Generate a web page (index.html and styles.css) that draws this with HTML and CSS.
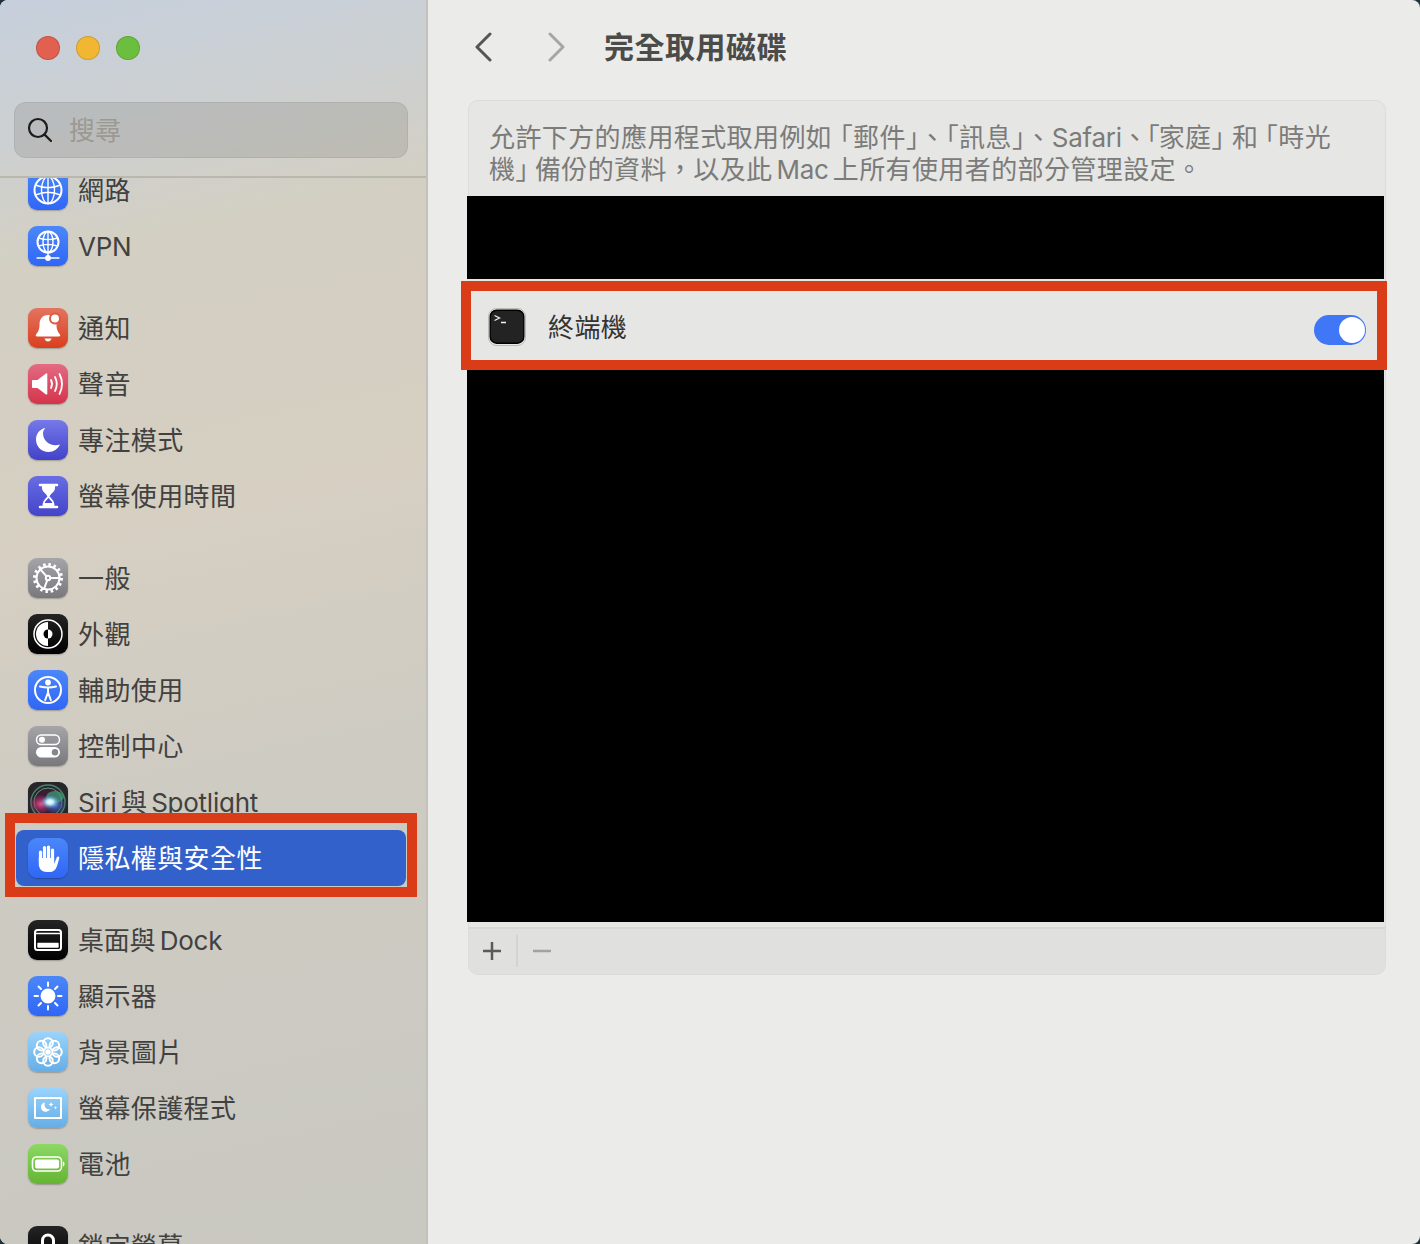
FILE: index.html
```html
<!DOCTYPE html>
<html lang="zh-Hant">
<head>
<meta charset="utf-8">
<title>完全取用磁碟</title>
<link rel="stylesheet" href="styles.css">
</head>
<body>
<div class="window">
  <aside class="sidebar">
    <div class="lights">
      <span class="light red"></span><span class="light yellow"></span><span class="light green"></span>
    </div>
    <div class="search">
      <svg class="search-icon" viewBox="0 0 26 26"><circle cx="11" cy="11" r="9"/><path d="M17.6 17.6 24 24"/></svg>
      <span class="search-text">搜尋</span>
    </div>
    <div class="divider"></div>
    <div class="scroller">
      <div class="list">
        <section class="group first">
          <div class="row"><span class="icon i-blue"><svg viewBox="0 0 40 40" class="line"><circle class="bold" cx="20" cy="20" r="13.500"/><ellipse cx="20" cy="20" rx="6.500" ry="13.500"/><path d="M20 6.500v27M7.500 15c8 3.500 17 3.500 25 0M7.500 25c8-3.500 17-3.500 25 0"/></svg></span><span class="label">網路</span></div>
          <div class="row"><span class="icon i-blue"><svg viewBox="0 0 40 40" class="line"><circle class="bold" cx="20" cy="16" r="10.500"/><ellipse cx="20" cy="16" rx="5" ry="10.500"/><path d="M20 5.500v21M10.500 12c6 2 13 2 19 0M10.500 20c6-2 13-2 19 0M20 27v5M9 32h22"/><circle class="solid" cx="20" cy="32" r="2.200"/></svg></span><span class="label latin">VPN</span></div>
        </section>
        <section class="group">
          <div class="row"><span class="icon i-red"><svg viewBox="0 0 40 40" class="fill"><path d="M20 7c-6 0-8.500 4.500-8.500 10 0 5-2 7.500-3.500 9.500-.6 1 0 2 1.200 2h21.600c1.200 0 1.800-1 1.200-2-1.500-2-3.500-4.500-3.500-9.500 0-5.500-2.500-10-8.500-10z"/><path d="M16.500 30.500h7c-.5 2-2 3-3.500 3s-3-1-3.500-3z"/><circle class="ring-red" cx="27" cy="10.500" r="5"/></svg></span><span class="label">通知</span></div>
          <div class="row"><span class="icon i-pink"><svg viewBox="0 0 40 40" class="fill"><path d="M5 16h4.500L18 9.500c.6-.4 1.300 0 1.300.7v19.600c0 .7-.7 1.100-1.300.7L9.500 24H5c-.6 0-1-.4-1-1v-6c0-.6.400-1 1-1z"/><path class="wave" d="M23 16c1.300 2.500 1.300 5.500 0 8M27 13c2.300 4.500 2.300 9.500 0 14M31.500 10c3.300 6.500 3.300 13.500 0 20"/></svg></span><span class="label">聲音</span></div>
          <div class="row"><span class="icon i-purple"><svg viewBox="0 0 40 40" class="fill"><path d="M17.500 8C11.500 9 8 14 8 19.500 8 26.500 13.500 32 20.500 32c5 0 9.500-3 11.500-7.500-1.500.6-3 .8-4.500.8-7 0-12.500-5.300-12.500-12 0-1.800.8-3.800 2.500-5.300z"/></svg></span><span class="label">專注模式</span></div>
          <div class="row"><span class="icon i-indigo"><svg viewBox="0 0 40 40"><path class="hg-line" d="M12 9h17M12 31h17"/><path class="hg-solid" d="M14 9h13v3c0 4-4.500 5.500-5 8h-3c-.5-2.500-5-4-5-8z"/><path class="hg-outline" d="M20.500 20c.4 2.500 5 4 5 8v3h-10v-3c0-4 4.600-5.500 5-8z"/><path class="hg-solid" d="M15 27h11v4H15z"/></svg></span><span class="label">螢幕使用時間</span></div>
        </section>
        <section class="group">
          <div class="row"><span class="icon i-gray"><svg viewBox="0 0 40 40" class="line"><circle class="teeth" cx="20" cy="20" r="13.500"/><circle class="bold" cx="20" cy="20" r="11.500"/><circle class="bold" cx="20" cy="20" r="2.200"/><path class="bold" d="M18.600 18.300 12 11M22.200 20H31.500M19.300 22.100 16 31"/></svg></span><span class="label">一般</span></div>
          <div class="row"><span class="icon i-black"><svg viewBox="0 0 40 40"><circle class="ap-ring" cx="20" cy="20" r="14"/><path class="ap-white" d="M20 8a12 12 0 0 0 0 24z"/><path class="ap-white" d="M20 15.500a4.500 4.500 0 0 1 0 9z"/><path class="ap-black" d="M20 15.500a4.500 4.500 0 0 0 0 9z"/></svg></span><span class="label">外觀</span></div>
          <div class="row"><span class="icon i-blue"><svg viewBox="0 0 40 40" class="line"><circle class="bold" cx="20" cy="20" r="13"/><circle class="solid" cx="20" cy="12.500" r="2.200"/><path class="bold" d="M12 16.500c5 1.300 11 1.300 16 0M20 17.500v6M20 22.500l-2.800 7.500M20 22.500l2.800 7.500"/></svg></span><span class="label">輔助使用</span></div>
          <div class="row"><span class="icon i-gray"><svg viewBox="0 0 40 40"><rect class="cc-line" x="8.500" y="9" width="23" height="9.500" rx="4.750"/><circle class="cc-white" cx="14" cy="13.750" r="3"/><rect class="cc-white" x="8" y="21" width="24" height="10.500" rx="5.250"/><circle class="cc-gray" cx="27" cy="26.250" r="3.200"/></svg></span><span class="label">控制中心</span></div>
          <div class="row"><span class="icon i-siri"><svg viewBox="0 0 40 40"><defs><radialGradient id="siriA"><stop offset="0" stop-color="#fff"/><stop offset=".35" stop-color="#bdeaf7"/><stop offset="1" stop-color="#3a7ed0" stop-opacity="0"/></radialGradient><radialGradient id="siriB"><stop offset="0" stop-color="#f0508c"/><stop offset="1" stop-color="#8a2458" stop-opacity=".25"/></radialGradient><radialGradient id="siriC"><stop offset="0" stop-color="#4a78d8"/><stop offset="1" stop-color="#2d4f90" stop-opacity=".3"/></radialGradient></defs><circle class="siri-ring" cx="20" cy="20" r="17"/><circle class="siri-ring-in" cx="20" cy="20" r="14"/><ellipse cx="13" cy="22" rx="11" ry="9" fill="url(#siriB)"/><ellipse cx="27" cy="23" rx="10" ry="8" fill="url(#siriC)"/><ellipse cx="27" cy="15" rx="9" ry="6" class="siri-green"/><ellipse cx="22" cy="20" rx="10" ry="7" fill="url(#siriA)"/></svg></span><span class="label latin">Siri&#8201;與&#8201;Spotlight</span></div>
          <div class="row selected"><span class="icon i-blue"><svg viewBox="0 0 40 40" class="hand"><path class="finger" d="M12.500 23V14M16.500 20V9.500M20.500 20V9M24.500 22V12"/><path class="palm" d="M10.800 20h15.400v6l2.600-6.800c.5-1.300 2.800-.8 2.500 1L29 28c-1.200 4-3.800 6-7.500 6H19c-5 0-8.200-3-8.200-8z"/></svg></span><span class="label">隱私權與安全性</span></div>
        </section>
        <section class="group">
          <div class="row"><span class="icon i-black"><svg viewBox="0 0 40 40" class="line"><rect class="bold" x="7" y="10" width="26" height="20" rx="2.500"/><path d="M7.500 13.500h25"/><rect class="solid" x="10" y="23.500" width="20" height="3.500"/></svg></span><span class="label latin">桌面與&#8201;Dock</span></div>
          <div class="row"><span class="icon i-blue"><svg viewBox="0 0 40 40" class="line bold"><circle class="solid" cx="20" cy="20" r="6.500"/><path d="M20 6.500v3.500M20 30v3.500M6.500 20H10M30 20h3.500M10.500 10.500l2.500 2.500M27 27l2.500 2.500M10.500 29.500 13 27M27 13l2.500-2.500"/></svg></span><span class="label">顯示器</span></div>
          <div class="row"><span class="icon i-sky"><svg viewBox="0 0 40 40" class="line bold"><circle cx="20" cy="11" r="4.800"/><circle cx="20" cy="29" r="4.800"/><circle cx="11" cy="20" r="4.800"/><circle cx="29" cy="20" r="4.800"/><circle cx="13.600" cy="13.600" r="4.800"/><circle cx="26.400" cy="13.600" r="4.800"/><circle cx="13.600" cy="26.400" r="4.800"/><circle cx="26.400" cy="26.400" r="4.800"/><circle class="solid" cx="20" cy="20" r="1.800"/></svg></span><span class="label">背景圖片</span></div>
          <div class="row"><span class="icon i-sky"><svg viewBox="0 0 40 40" class="line bold"><rect x="7" y="10" width="26" height="20"/><path class="solid no-stroke" d="M17 14.500c-3 .8-4.500 3-4 5.500.5 2.800 3.200 4.200 6 3.500 1.500-.4 2.600-1.300 3.200-2.500-3.800 1-6.700-2.500-5.200-6.500zM23 14l.8 1.700 1.700.8-1.700.8L23 19l-.8-1.700-1.700-.8 1.700-.8zM27.500 18l.5 1.200 1.200.5-1.200.5-.5 1.200-.5-1.200-1.200-.5 1.200-.5z"/></svg></span><span class="label">螢幕保護程式</span></div>
          <div class="row"><span class="icon i-green"><svg viewBox="0 0 40 40"><rect class="bat-line" x="4.500" y="13" width="29" height="14" rx="4"/><rect class="cc-white" x="7" y="15.500" width="24" height="9" rx="2"/><path class="cc-white" d="M35 17.500c1 .5 1.500 1.500 1.500 2.500s-.5 2-1.500 2.500z"/></svg></span><span class="label">電池</span></div>
        </section>
        <section class="group">
          <div class="row"><span class="icon i-black"><svg viewBox="0 0 40 40"><path class="lock-arc" d="M14.500 19v-4.500a5.500 5.500 0 0 1 11 0V19"/><rect class="cc-white" x="11" y="18" width="18" height="14" rx="2.500"/></svg></span><span class="label">鎖定螢幕</span></div>
        </section>
      </div>
      <div class="mark mark-side"></div>
    </div>
  </aside>
  <main class="content">
    <header class="toolbar">
      <svg class="chevron back" viewBox="0 0 18 30"><path d="M16 2 3 15l13 13"/></svg>
      <svg class="chevron forward" viewBox="0 0 18 30"><path d="M2 2l13 13L2 28"/></svg>
      <h1 class="title">完全取用磁碟</h1>
    </header>
    <section class="panel">
      <p class="desc">允許下方的應用程式取用例如<span class="open">「</span>郵件」、「訊息」、<span class="lat">Safari</span><span class="cm">、「</span>家庭<span class="br">」</span>和<span class="open wide">「</span>時光<br>機<span class="br wide">」</span>備份的資料，以及此<span class="lat gap">Mac</span>上所有使用者的部分管理設定。</p>
      <div class="redact short"></div>
      <div class="app-row">
        <svg class="terminal" viewBox="0 0 38 38"><rect class="term-edge" x="0.500" y="0.500" width="37" height="37" rx="8"/><rect class="term-body" x="2.200" y="2.200" width="33.600" height="33" rx="6.500"/><path class="term-glyph" d="M6.500 7.500l5 2.500-5 2.500M13 14.500h5"/></svg>
        <span class="app-name">終端機</span>
        <span class="toggle"><span class="knob"></span></span>
        <div class="mark mark-row"></div>
      </div>
      <div class="redact tall"></div>
      <footer class="actions">
        <svg class="act add" viewBox="0 0 18 18"><path d="M9 0v18M0 9h18"/></svg>
        <span class="sep"></span>
        <svg class="act remove" viewBox="0 0 18 18"><path d="M0 9h18"/></svg>
      </footer>
    </section>
  </main>
</div>
</body>
</html>
```

FILE: styles.css
```css
* { box-sizing: border-box; }
html, body { margin: 0; height: 100%; overflow: hidden; }
body { background: #1f3238; font-family: Inter, "Noto Sans CJK TC", sans-serif; }

.window { display: flex; height: 1244px; border-radius: 8px; overflow: hidden; background: #ebebe9; }

.sidebar {
  position: relative;
  flex: 0 0 428px;
  display: flex;
  flex-direction: column;
  background: linear-gradient(168deg, #c6cfdc 0%, #ccd0d2 10%, #d3cfc3 20%, #d6cfc2 42%, #cecbc2 62%, #c9c8c1 100%);
  border-right: 2px solid #c2c1bc;
}
.lights { display: flex; gap: 16px; padding: 36px 0 0 36px; }
.light { width: 24px; height: 24px; border-radius: 50%; border: 1px solid rgba(0,0,0,.14); }
.light.red { background: #e1604f; }
.light.yellow { background: #f2b732; }
.light.green { background: #6cbf3e; }

.search {
  display: flex; align-items: center;
  margin: 42px 0 0 14px;
  width: 394px; height: 56px;
  padding-left: 12px;
  border-radius: 12px;
  background: rgba(90,90,80,.16);
  border: 1px solid rgba(0,0,0,.06);
}
.search-icon { width: 26px; height: 26px; fill: none; stroke: #1c1c1c; stroke-width: 2.2; stroke-linecap: round; }
.search-text { margin-left: 16px; padding-top: 2px; font-size: 26px; line-height: 32px; color: #9a9992; }

.divider { margin-top: 18px; height: 2px; background: #bab7ad; }

.scroller { flex: 1; overflow: hidden; }
.list { margin-top: -16px; }
.group { margin-top: 26px; }
.group.first { margin-top: 0; }

.row { display: flex; align-items: center; gap: 10px; height: 56px; margin: 0 20px 0 16px; padding-left: 12px; border-radius: 8px; }
.row.selected { background: #3361cc; }
.label { padding-top: 2px; font-size: 26px; line-height: 32px; letter-spacing: .4px; color: #414140; white-space: nowrap; }
.label.latin { letter-spacing: -.25px; }
.row.selected .label { color: #fff; }

.icon { flex: 0 0 40px; width: 40px; height: 40px; border-radius: 9px; overflow: hidden; box-shadow: 0 1px 1.500px rgba(0,0,0,.25); }
.icon svg { display: block; width: 40px; height: 40px; }
.i-blue { background: linear-gradient(#4b87f9, #2f66f6); }
.i-red { background: linear-gradient(#e3745f, #da3f1f); }
.i-pink { background: linear-gradient(#e26b83, #d5344b); }
.i-purple { background: linear-gradient(#7579e9, #4343c8); }
.i-indigo { background: linear-gradient(#686de5, #4444c9); }
.i-gray { background: linear-gradient(#a5a5a9, #78787d); }
.i-black { background: linear-gradient(#242424, #000); }
.i-sky { background: linear-gradient(#9ad3fb, #66ade6); }
.i-green { background: linear-gradient(#8cd865, #65b432); }
.i-siri { background: #26262a; }

.line { fill: none; stroke: #fff; stroke-width: 1.400; stroke-linecap: round; stroke-linejoin: round; }
.line.bold, .line .bold { stroke-width: 2; }
.line .solid, .solid { fill: #fff; }
.no-stroke { stroke: none; }
.line .teeth { stroke-width: 3; stroke-dasharray: 2.500 2.800; stroke-linecap: butt; }
.fill { fill: #fff; }
.ring-red { fill: #fff; stroke: #de5a3d; stroke-width: 2; }
.wave { fill: none; stroke: #fff; stroke-width: 1.800; stroke-linecap: round; }
.hg-line { fill: none; stroke: #fff; stroke-width: 2.600; stroke-linecap: round; }
.hg-solid { fill: #fff; }
.hg-outline { fill: none; stroke: #fff; stroke-width: 1.800; }
.ap-ring { fill: none; stroke: #fff; stroke-width: 1.500; }
.ap-white { fill: #fff; }
.ap-black { fill: #000; }
.cc-line { fill: none; stroke: #fff; stroke-width: 1.500; }
.cc-white { fill: #fff; }
.cc-gray { fill: #85858a; }
.bat-line { fill: none; stroke: #fff; stroke-width: 1.600; }
.lock-arc { fill: none; stroke: #fff; stroke-width: 3; }
.siri-ring { fill: none; stroke: #4d7d6c; stroke-width: 1.500; }
.siri-ring-in { fill: #3a1c34; stroke: #5f9a84; stroke-width: 1; }
.siri-green { fill: #3e9c78; opacity: .75; }
.finger { fill: none; stroke: #fff; stroke-width: 3.200; stroke-linecap: round; }
.palm { fill: #fff; }

.mark { position: absolute; border: 10px solid #d93c17; pointer-events: none; }
.mark-side { left: 5px; top: 813px; width: 412px; height: 84px; }

.content { flex: 1; min-width: 0; padding: 0 34px 0 40px; }
.toolbar { display: flex; align-items: center; height: 100px; padding-bottom: 6px; }
.chevron { width: 18px; height: 30px; fill: none; stroke-width: 3; stroke-linecap: round; stroke-linejoin: round; }
.chevron.back { margin-left: 6px; stroke: #555553; }
.chevron.forward { margin-left: 56px; stroke: #a6a6a4; }
.title { margin: 0 0 0 38px; font-size: 30px; line-height: 40px; font-weight: 700; color: #4b4b4a; letter-spacing: .5px; }

.panel { width: 918px; height: 875px; border: 1px solid #dcdcda; border-radius: 10px; background: #e6e6e4; display: flex; flex-direction: column; }
.desc { flex: none; margin: 0; height: 95px; padding: 21px 0 0 20px; font-size: 26px; line-height: 32px; color: #7b7b79; white-space: nowrap; letter-spacing: .4px; }
.open { margin-left: -5.500px; }
.open.wide { margin-left: -6.500px; }
.br { letter-spacing: -5.500px; }
.br.wide { letter-spacing: -6.500px; }
.cm { letter-spacing: -1.100px; }
.lat { letter-spacing: -.25px; }
.lat.gap { margin: 0 4px; }
.redact { flex: none; background: #000; margin: 0 1px 0 -2px; }
.redact.short { height: 83px; }
.redact.tall { height: 552px; }

.app-row { position: relative; flex: none; display: flex; align-items: center; height: 91px; padding: 4px 18px 0 21px; margin: 0 1px 0 -2px; background: #e6e6e4; }
.terminal { flex: none; width: 38px; height: 38px; }
.term-edge { fill: #e9e9e9; stroke: #9a9a9a; stroke-width: .6; }
.term-body { fill: #232323; stroke: #000; stroke-width: 1.400; }
.term-glyph { fill: none; stroke: #f2f2f2; stroke-width: 1.300; }
.app-name { flex: 1; margin-left: 22px; padding-top: 2px; font-size: 26px; line-height: 32px; letter-spacing: .4px; color: #333332; }
.toggle { position: relative; flex: none; width: 52px; height: 30px; border-radius: 15px; margin-top: 7px; background: #3f77f6; }
.knob { position: absolute; right: 1px; top: 2px; width: 26px; height: 26px; border-radius: 50%; background: #fff; }
.mark-row { left: -6px; right: -3px; top: 2px; bottom: 0; }

.actions { flex: none; height: 47px; margin-top: 5px; display: flex; align-items: center; padding: 0 0 2px 14px; background: #e0e0de; border-top: 2px solid #d7d7d5; border-radius: 0 0 9px 9px; }
.act { width: 18px; height: 18px; fill: none; stroke-width: 2.500; }
.act.add { stroke: #5a5a5a; }
.act.remove { stroke: #a2a2a0; }
.sep { width: 2px; height: 32px; margin: 0 15px; background: #d3d3d1; }
```
